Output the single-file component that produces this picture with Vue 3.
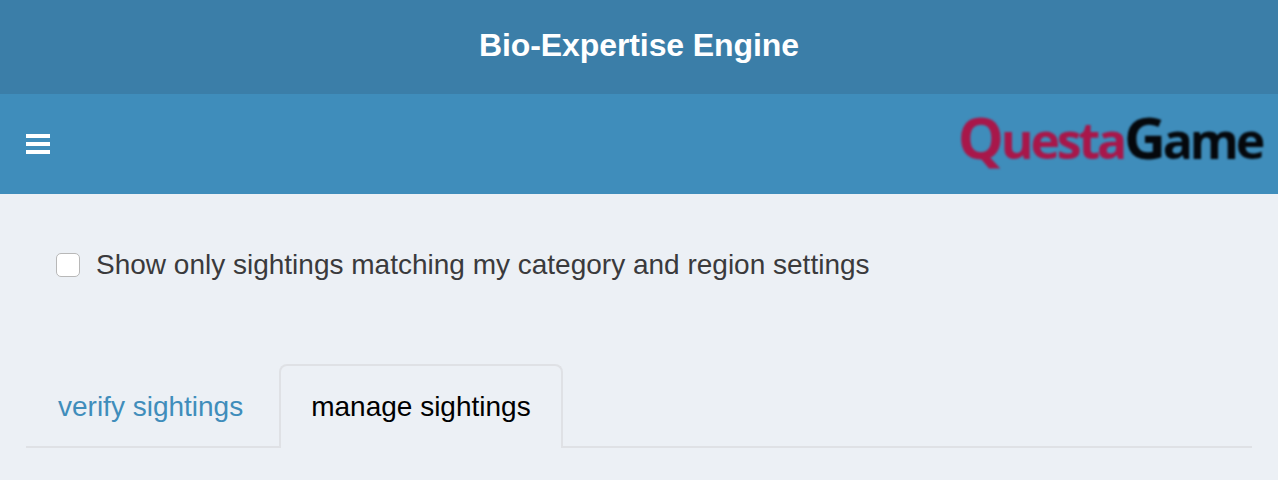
<script setup>
const title = 'Bio-Expertise Engine'
const label = 'Show only sightings matching my category and region settings'
</script>

<template>
  <div class="page">
    <header class="top">{{ title }}</header>
    <nav class="bar">
      <button class="burger" aria-label="menu"><span></span><span></span><span></span></button>
      <div class="logo"><span class="red"><span class="cap">Q</span>uesta</span><span class="dark"><span class="cap">G</span>ame</span></div>
    </nav>
    <main class="content">
      <label class="check">
        <span class="box"></span>
        <span class="text">{{ label }}</span>
      </label>
      <div class="tabs">
        <a class="tab">verify sightings</a>
        <a class="tab active">manage sightings</a>
      </div>
    </main>
  </div>
</template>

<style>
html, body { margin: 0; background: #ecf0f5; }
</style>

<style scoped>
.page { font-family: "Liberation Sans", Arial, sans-serif; height: 480px; overflow: hidden; background: #ecf0f5; }
.top { height: 94px; background: #3b7ea8; color: #fff; font-size: 32px; font-weight: 700; letter-spacing: -0.1px; display: flex; align-items: center; justify-content: center; padding-bottom: 4px; box-sizing: border-box; }
.bar { height: 100px; background: #3f8dbb; display: flex; align-items: center; justify-content: space-between; padding: 0 16px 0 26px; }
.burger { display: flex; flex-direction: column; gap: 4px; padding: 0; border: 0; background: none; }
.burger span { display: block; width: 24px; height: 4px; background: #fff; }
.logo { font-family: "Open Sans", sans-serif; font-size: 50px; font-weight: 700; letter-spacing: -3.2px; filter: blur(0.8px); line-height: 1; margin-bottom: 9px; }
.cap { font-size: 58px; line-height: 0; }
.red { color: #a8174a; }
.dark { color: #05080c; }
.content { padding: 58px 26px 0; }
.check { display: flex; align-items: center; gap: 16px; padding-left: 30px; font-size: 28px; color: #3a3a3c; line-height: 24px; }
.text { padding-top: 1px; }
.box { width: 22px; height: 22px; background: #fff; border: 1px solid #b8b8b8; border-radius: 5px; flex: none; }
.tabs { display: flex; margin-top: 87px; border-bottom: 2px solid #dfe1e5; height: 84px; box-sizing: border-box; }
.tab { font-size: 28px; color: #3f8dbb; padding: 2px 32px 0; margin-right: 4px; display: flex; align-items: center; height: 84px; box-sizing: border-box; }
.tab.active { color: #000; border: 2px solid #dfe1e5; border-bottom: 0; border-radius: 8px 8px 0 0; background: #ecf0f5; padding: 0 30px; margin-right: 0; }
</style>
